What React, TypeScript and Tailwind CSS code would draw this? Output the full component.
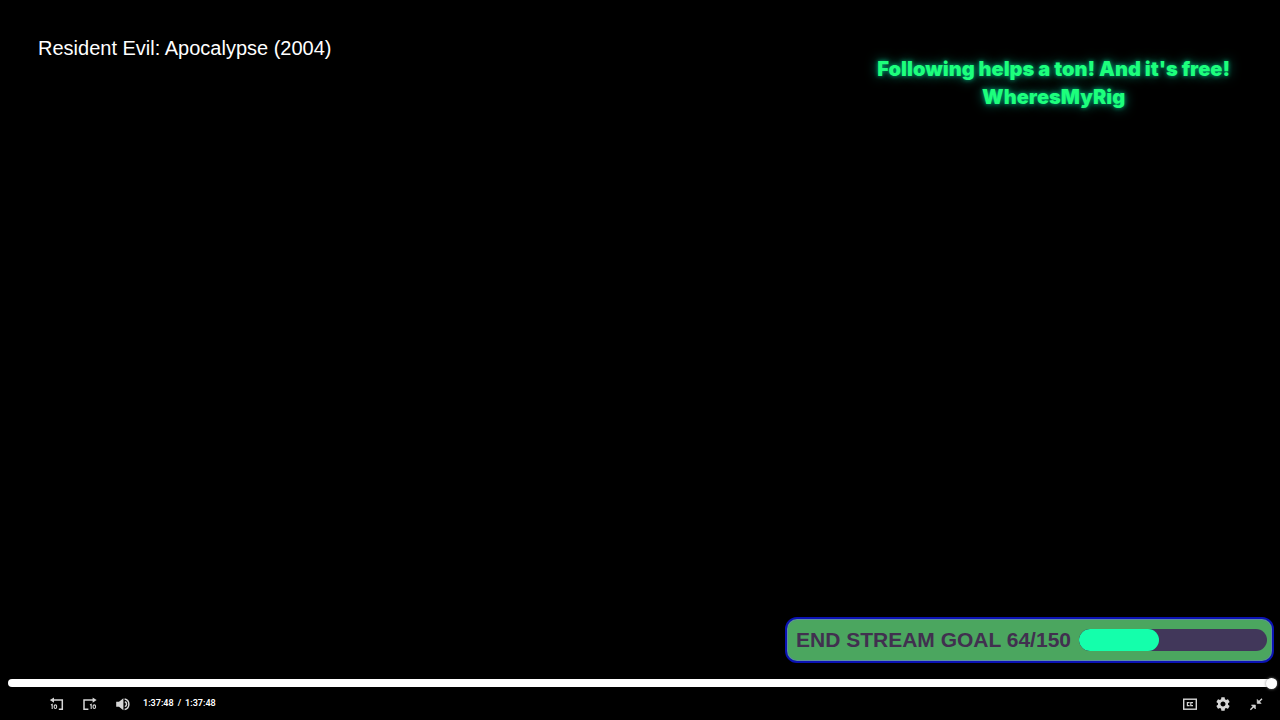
import { useState } from "react";
import type { ReactNode } from "react";

function ControlButton({ label, children }: { label: string; children: ReactNode }) {
  return (
    <button type="button" aria-label={label} className="flex size-4 items-center justify-center text-[#d6d6d6]">
      {children}
    </button>
  );
}

function RewindIcon() {
  return (
    <svg viewBox="0 0 16 16" className="size-4" fill="none" stroke="currentColor">
      <path d="M4 4.1H13.3V13.2H9.8" strokeWidth="1.5" />
      <path d="M.8 4.1 5 1.4V6.8Z" fill="currentColor" stroke="none" />
      <path d="M2 9.1 3.2 8.4V13" strokeWidth="1.1" />
      <rect x="5.2" y="8.9" width="2.4" height="3.6" rx="1.2" strokeWidth="1.1" />
    </svg>
  );
}

function ForwardIcon() {
  return (
    <svg viewBox="0 0 16 16" className="size-4" fill="none" stroke="currentColor">
      <path d="M11.4 4.1H2V13.2H6.4" strokeWidth="1.5" />
      <path d="M14.6 4.1 10.6 1.4V6.8Z" fill="currentColor" stroke="none" />
      <path d="M8 9.1 9.2 8.4V13" strokeWidth="1.1" />
      <rect x="11.1" y="8.9" width="2.4" height="3.6" rx="1.2" strokeWidth="1.1" />
    </svg>
  );
}

function VolumeIcon() {
  return (
    <svg viewBox="0 0 16 16" className="size-4" fill="none" stroke="currentColor">
      <path d="M1.2 5.8H4L8.4 2.2V14.2L4 10.8H1.2Z" fill="currentColor" stroke="none" />
      <path d="M9.8 5.8A2.5 2.5 0 0 1 9.8 10.6" strokeWidth="1.5" />
      <path d="M9.6 3A5.3 5.3 0 0 1 9.6 13.4" strokeWidth="1.5" />
    </svg>
  );
}

function CaptionsIcon() {
  return (
    <svg viewBox="0 0 16 16" className="size-4" fill="none" stroke="currentColor">
      <rect x="1.7" y="3.2" width="12.6" height="10" strokeWidth="1.4" />
      <path d="M7.6 6.7H5.4V9.7H7.6M11 6.7H8.8V9.7H11" strokeWidth="1.2" />
    </svg>
  );
}

function SettingsIcon() {
  return (
    <svg viewBox="2 2 20 20" className="size-3.5" fill="currentColor">
      <path d="M19.14 12.94c.04-.3.06-.61.06-.94 0-.32-.02-.64-.07-.94l2.03-1.58c.18-.14.23-.41.12-.61l-1.92-3.32c-.12-.22-.37-.29-.59-.22l-2.39.96c-.5-.38-1.03-.7-1.62-.94l-.36-2.54c-.04-.24-.24-.41-.48-.41h-3.84c-.24 0-.43.17-.47.41l-.36 2.54c-.59.24-1.13.57-1.62.94l-2.39-.96c-.22-.08-.47 0-.59.22L2.74 8.87c-.12.21-.08.47.12.61l2.03 1.58c-.05.3-.09.63-.09.94s.02.64.07.94l-2.03 1.58c-.18.14-.23.41-.12.61l1.92 3.32c.12.22.37.29.59.22l2.39-.96c.5.38 1.03.7 1.62.94l.36 2.54c.05.24.24.41.48.41h3.84c.24 0 .44-.17.47-.41l.36-2.54c.59-.24 1.13-.56 1.62-.94l2.39.96c.22.08.47 0 .59-.22l1.92-3.32c.12-.22.07-.47-.12-.61l-2.01-1.58zM12 15.6c-1.98 0-3.6-1.62-3.6-3.6s1.62-3.6 3.6-3.6 3.6 1.62 3.6 3.6-1.62 3.6-3.6 3.6z" />
    </svg>
  );
}

function ExitFullscreenIcon() {
  return (
    <svg viewBox="0 0 16 16" className="size-4" fill="currentColor" stroke="currentColor">
      <path d="M9.2 3.4 9.2 7.4 13.2 7.4ZM3.4 9 7.4 9 7.4 13Z" strokeWidth="0.6" />
      <path d="M10 6.8 14 2.8M6.6 9.6 2.4 13.8" strokeWidth="1.4" />
    </svg>
  );
}

function StreamGoal({ current, target }: { current: number; target: number }) {
  return (
    <section className="flex items-center gap-2 rounded-xl border-2 border-[#0b12b4] bg-[#4ba65f] py-[7px] pr-[5px] pl-[9px] ring-1 ring-[#5e8da0] ring-inset">
      <h2 className="text-[21px] leading-7 font-bold whitespace-nowrap text-[#41304f]">
        END STREAM GOAL {current}/{target}
      </h2>
      <div
        role="progressbar"
        aria-label="Stream goal"
        aria-valuenow={current}
        aria-valuemax={target}
        className="h-[22px] w-[188px] overflow-hidden rounded-full bg-[#41375a]"
      >
        <div className="h-full rounded-full bg-[#14ffab]" style={{ width: `${(current / target) * 100}%` }} />
      </div>
    </section>
  );
}

export default function App() {
  const duration = 5868;
  const [position, setPosition] = useState(duration);

  return (
    <main className="flex min-h-screen flex-col bg-black font-['Liberation_Sans',Arial,sans-serif] text-white">
      <header className="flex flex-1 items-start justify-between pt-9 pr-[50px] pl-[38px]">
        <h1 className="text-xl leading-6">Resident Evil: Apocalypse (2004)</h1>
        <p className="pt-[19px] text-center font-['Inter',sans-serif] text-xl leading-7 font-black text-[#1dff7c] [text-shadow:0_0_4px_#00a070,0_0_12px_#008c70]">
          Following helps a ton! And it's free!
          <br />
          WheresMyRig
        </p>
      </header>

      <div className="flex justify-end pr-1.5">
        <StreamGoal current={64} target={150} />
      </div>

      <footer className="pt-[14px] pb-2">
        <div className="flex pr-[3px] pl-2">
          <input
            type="range"
            aria-label="Seek"
            min={0}
            max={duration}
            value={position}
            onChange={(e) => setPosition(Number(e.target.value))}
            className="my-0.5 h-2 w-full appearance-none rounded-full bg-white [&::-webkit-slider-thumb]:size-[11px] [&::-webkit-slider-thumb]:appearance-none [&::-webkit-slider-thumb]:rounded-full [&::-webkit-slider-thumb]:bg-white [&::-webkit-slider-thumb]:shadow-[0_0_3px_#888888]"
          />
        </div>
        <div className="flex items-center justify-between pt-[7px] pr-4 pl-[49px]">
          <div className="flex items-center gap-[17px]">
            <ControlButton label="Rewind 10 seconds"><RewindIcon /></ControlButton>
            <ControlButton label="Forward 10 seconds"><ForwardIcon /></ControlButton>
            <ControlButton label="Mute"><VolumeIcon /></ControlButton>
            <div className="-ml-[5px] flex gap-1 pb-0.5 font-['Roboto',sans-serif] text-[9px] leading-3 font-semibold">
              <time>1:37:48</time>
              <span>/</span>
              <time>1:37:48</time>
            </div>
          </div>
          <div className="flex items-center gap-[17px]">
            <ControlButton label="Captions"><CaptionsIcon /></ControlButton>
            <ControlButton label="Settings"><SettingsIcon /></ControlButton>
            <ControlButton label="Exit full screen"><ExitFullscreenIcon /></ControlButton>
          </div>
        </div>
      </footer>
    </main>
  );
}
